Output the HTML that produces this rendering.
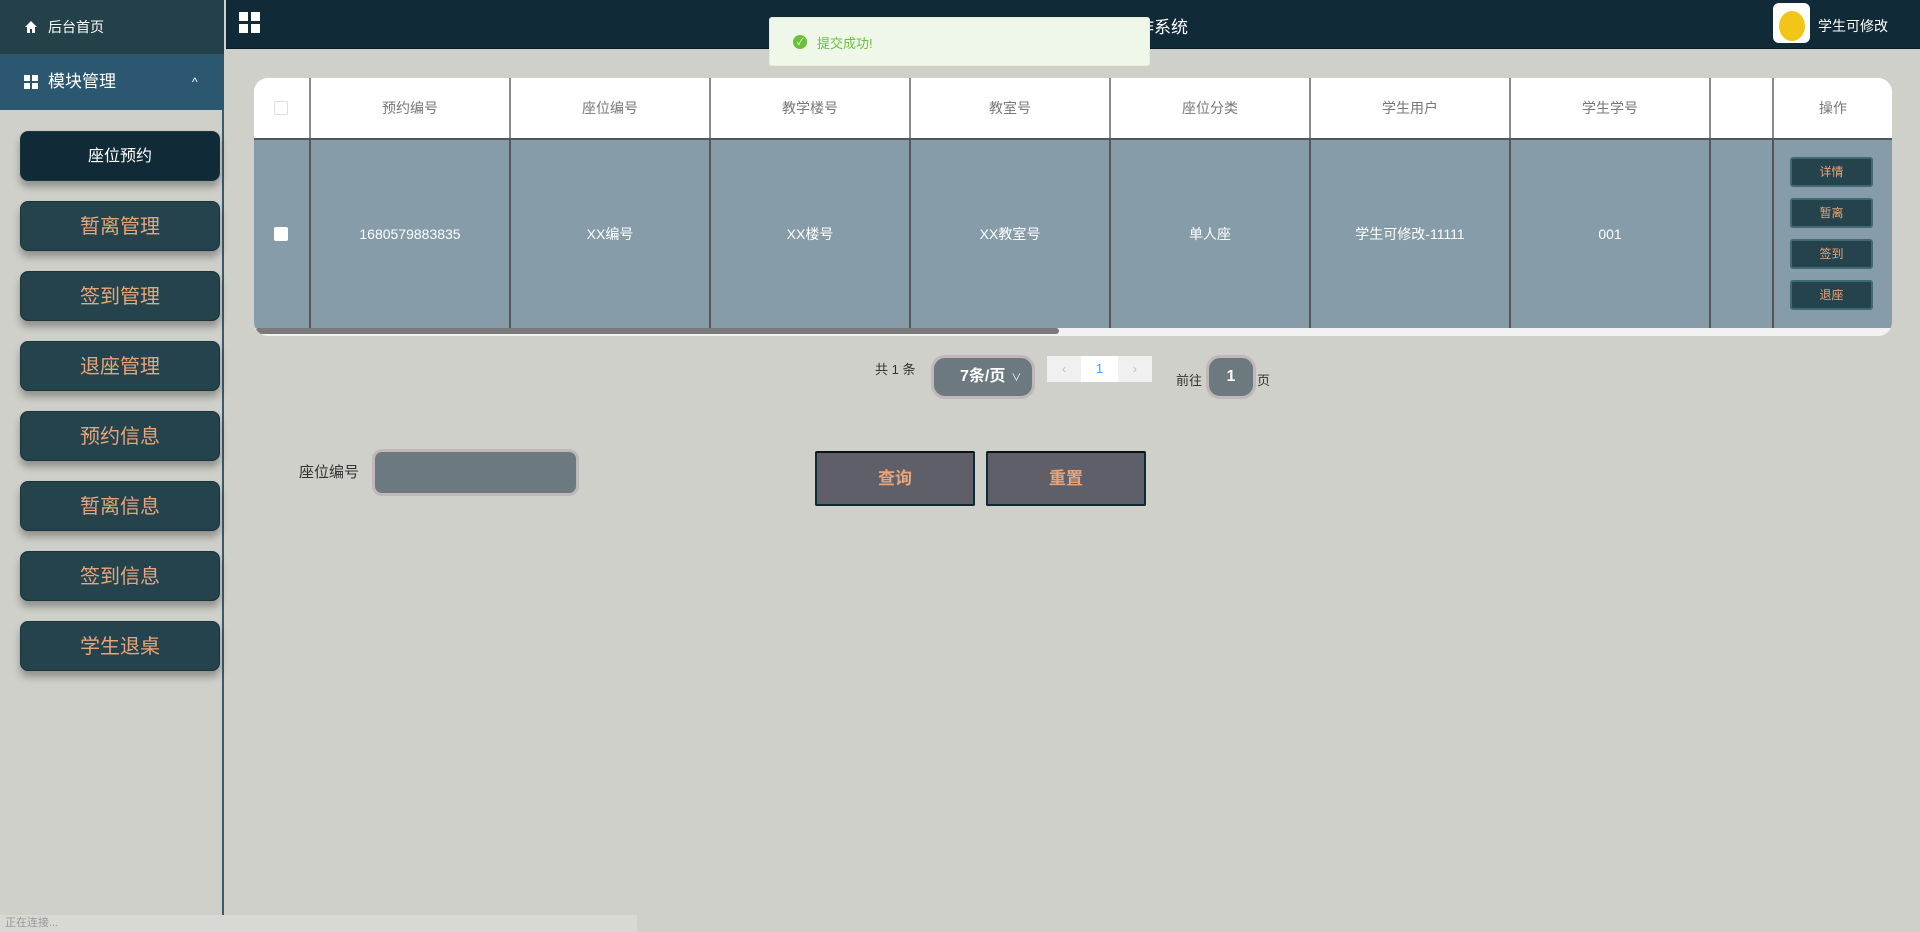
<!DOCTYPE html>
<html><head><meta charset="utf-8"><style>
*{margin:0;padding:0;box-sizing:border-box}
body{width:1920px;height:932px;background:#cfd0ca;font-family:"Liberation Sans","Noto Sans CJK SC",sans-serif;position:relative;overflow:hidden}
.abs{position:absolute}
#side{left:0;top:0;width:224px;height:932px;background:#cfd0ca;border-right:2px solid #3a5a6e}
#home{left:0;top:0;width:224px;height:54px;background:#24414a;color:#fff;font-size:14px;line-height:54px;padding-left:48px}
#mod{left:0;top:54px;width:224px;height:56px;background:#2b5870;color:#fff;font-size:17px;line-height:56px;padding-left:48px}
.mb{left:20px;width:200px;height:50px;border-radius:8px;background:#25434c;color:#e8a57a;font-size:20px;line-height:50px;text-align:center;box-shadow:0 6px 8px rgba(0,0,0,.3);border:1px solid #1b333a}
#hdr{left:226px;top:0;width:1694px;height:49px;background:#112a37;border-bottom:1px solid #0b1c25}
#tbl{left:254px;top:78px;width:1638px;height:258px;background:#fff;border-radius:14px;overflow:hidden}
.th{position:absolute;top:0;height:60px;border-left:2px solid #8a8a8a;color:#777;font-size:14px;line-height:60px;text-align:center;background:#fff}
.td{position:absolute;top:60px;height:190px;border-left:2px solid #555;border-top:2px solid #555;color:#fff;font-size:14px;line-height:188px;text-align:center;background:#869ca8}
.ab{position:absolute;left:1790px;width:83px;height:30px;background:#25434c;border:2px solid #3e6b72;border-radius:3px;color:#e8a57a;font-size:12px;line-height:26px;text-align:center}
.qb{top:451px;width:160px;height:55px;background:#5e5f68;border:2px solid #0e2a33;border-top-color:#0a1418;color:#e8a57a;font-size:17px;font-weight:bold;line-height:51px;text-align:center;border-radius:2px}
</style></head><body>
<div id="side" class="abs"></div>
<div id="home" class="abs"><svg class="abs" style="left:24px;top:20px" width="14" height="14" viewBox="0 0 14 14"><path d="M7 1L1 7h2v6h3V9h2v4h3V7h2z" fill="#fff"/></svg>后台首页</div>
<div id="mod" class="abs"><svg class="abs" style="left:24px;top:21px" width="14" height="14"><rect x="0" y="0" width="6" height="6" fill="#fff"/><rect x="8" y="0" width="6" height="6" fill="#fff"/><rect x="0" y="8" width="6" height="6" fill="#fff"/><rect x="8" y="8" width="6" height="6" fill="#fff"/></svg>模块管理<span class="abs" style="left:192px;top:0;font-size:12px">^</span></div>
<div class="mb abs" style="top:131px;background:#112a37;color:#fff;font-size:16px">座位预约</div>
<div class="mb abs" style="top:201px">暂离管理</div>
<div class="mb abs" style="top:271px">签到管理</div>
<div class="mb abs" style="top:341px">退座管理</div>
<div class="mb abs" style="top:411px">预约信息</div>
<div class="mb abs" style="top:481px">暂离信息</div>
<div class="mb abs" style="top:551px">签到信息</div>
<div class="mb abs" style="top:621px">学生退桌</div>
<div id="hdr" class="abs"></div>
<svg class="abs" style="left:239px;top:12px" width="22" height="22"><rect x="0" y="0" width="9" height="9" fill="#fff"/><rect x="12" y="0" width="9" height="9" fill="#fff"/><rect x="0" y="12" width="9" height="9" fill="#fff"/><rect x="12" y="12" width="9" height="9" fill="#fff"/></svg>
<div class="abs" style="left:967px;top:13px;color:#fff;font-size:17px">教室座位预约与签到工作系统</div>
<div class="abs" style="left:1773px;top:3px;width:37px;height:40px;background:#fff;border-radius:6px;overflow:hidden"><div style="position:absolute;left:6px;top:8px;width:26px;height:30px;border-radius:50%;background:#f1c619"></div></div>
<div class="abs" style="left:1818px;top:16px;color:#fff;font-size:14px">学生可修改</div>
<div class="abs" style="left:769px;top:17px;width:381px;height:49px;background:#eff7e9;border:1px solid #e1efd8;border-radius:3px"><div class="abs" style="left:23px;top:17px;width:14px;height:14px;border-radius:50%;background:#67c23a;color:#fff;font-size:9px;line-height:14px;text-align:center">✓</div><div class="abs" style="left:47px;top:15px;color:#67c23a;font-size:13px">提交成功!</div></div>
<div id="tbl" class="abs">
<div class="th" style="left:0;width:55px;border-left:none"><div style="position:absolute;left:20px;top:23px;width:14px;height:14px;border:1px solid #ddd;border-radius:2px"></div></div>
<div class="th" style="left:55px;width:200px">预约编号</div>
<div class="th" style="left:255px;width:200px">座位编号</div>
<div class="th" style="left:455px;width:200px">教学楼号</div>
<div class="th" style="left:655px;width:200px">教室号</div>
<div class="th" style="left:855px;width:200px">座位分类</div>
<div class="th" style="left:1055px;width:200px">学生用户</div>
<div class="th" style="left:1255px;width:200px">学生学号</div>
<div class="th" style="left:1455px;width:63px"></div>
<div class="th" style="left:1518px;width:120px">操作</div>
<div class="td" style="left:0;width:55px;border-left:none"><div style="position:absolute;left:20px;top:87px;width:14px;height:14px;background:#fff;border-radius:2px"></div></div>
<div class="td" style="left:55px;width:200px">1680579883835</div>
<div class="td" style="left:255px;width:200px">XX编号</div>
<div class="td" style="left:455px;width:200px">XX楼号</div>
<div class="td" style="left:655px;width:200px">XX教室号</div>
<div class="td" style="left:855px;width:200px">单人座</div>
<div class="td" style="left:1055px;width:200px">学生可修改-11111</div>
<div class="td" style="left:1255px;width:200px">001</div>
<div class="td" style="left:1455px;width:63px"></div>
<div class="td" style="left:1518px;width:120px"></div>
<div style="position:absolute;left:0;top:250px;width:1638px;height:8px;background:#f2f2f2"></div>
<div style="position:absolute;left:1px;top:250px;width:804px;height:6px;background:#7a7a7a;border-radius:3px"></div>
</div>
<div class="ab" style="top:157px">详情</div>
<div class="ab" style="top:198px">暂离</div>
<div class="ab" style="top:239px">签到</div>
<div class="ab" style="top:280px">退座</div>
<div class="abs" style="left:875px;top:359px;font-size:13px;color:#333">共 1 条</div>
<div class="abs" style="left:931px;top:355px;width:104px;height:44px;border-radius:14px;background:#6c7a80;border:3px solid #c0b8b8;color:#fff;font-size:16px;font-weight:bold;line-height:38px;padding-left:26px">7条/页<span style="font-size:10px;font-weight:normal;margin-left:6px">∨</span></div>
<div class="abs" style="left:1047px;top:356px;width:34px;height:26px;background:#f0f0f0;color:#bbb;font-size:12px;line-height:26px;text-align:center">‹</div>
<div class="abs" style="left:1081px;top:356px;width:37px;height:26px;background:#fff;color:#409eff;font-size:13px;line-height:26px;text-align:center">1</div>
<div class="abs" style="left:1118px;top:356px;width:34px;height:26px;background:#f0f0f0;color:#bbb;font-size:12px;line-height:26px;text-align:center">›</div>
<div class="abs" style="left:1176px;top:370px;font-size:13px;color:#333">前往</div>
<div class="abs" style="left:1206px;top:355px;width:50px;height:44px;border-radius:14px;background:#6c7a80;border:3px solid #c0b8b8;color:#fff;font-size:16px;font-weight:bold;line-height:38px;text-align:center">1</div>
<div class="abs" style="left:1257px;top:370px;font-size:13px;color:#333">页</div>
<div class="abs" style="left:299px;top:461px;font-size:15px;color:#333">座位编号</div>
<div class="abs" style="left:372px;top:449px;width:207px;height:47px;border-radius:10px;background:#6c7a80;border:3px solid #c0b8b8"></div>
<div class="qb abs" style="left:815px">查询</div>
<div class="qb abs" style="left:986px">重置</div>
<div class="abs" style="left:0;top:915px;width:637px;height:17px;background:#d8d8d4;color:#999;font-size:11px;line-height:17px;padding-left:5px">正在连接...</div>
</body></html>
